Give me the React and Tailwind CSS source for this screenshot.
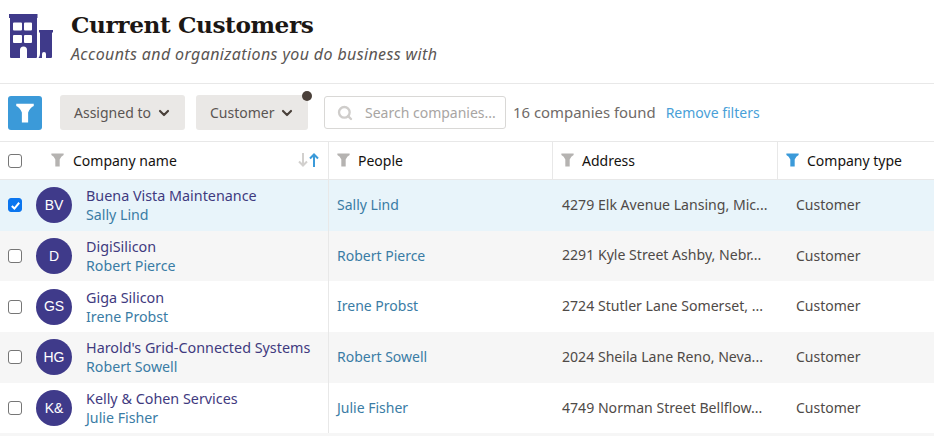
import { Search, ChevronDown } from "lucide-react";

const sans = "font-['Noto_Sans','Open_Sans',sans-serif]";

const ROWS = [
  { initials: "BV", name: "Buena Vista Maintenance", person: "Sally Lind", address: "4279 Elk Avenue Lansing, Mic...", selected: true },
  { initials: "D", name: "DigiSilicon", person: "Robert Pierce", address: "2291 Kyle Street Ashby, Nebr...", striped: true },
  { initials: "GS", name: "Giga Silicon", person: "Irene Probst", address: "2724 Stutler Lane Somerset, ..." },
  { initials: "HG", name: "Harold's Grid-Connected Systems", person: "Robert Sowell", address: "2024 Sheila Lane Reno, Neva...", striped: true },
  { initials: "K&", name: "Kelly & Cohen Services", person: "Julie Fisher", address: "4749 Norman Street Bellflow..." },
];

/* ── Funnel glyph, used in the toolbar and column heads ── */
function Funnel({ className }) {
  return (
    <svg viewBox="0 0 14 16" className={className} fill="currentColor">
      <path d="M0 0.5h14v1.800Q11 3.500 9.500 7.500V15.500H4.500V7.500Q3 3.500 0 2.300z" />
    </svg>
  );
}

function SortArrow({ up, className }) {
  return (
    <svg viewBox="0 0 10 14" className={`w-[10px] h-[14px] ${className}`} fill="none" stroke="currentColor" strokeWidth="2">
      <path d={up ? "M5 1.500V14M1 5.500l4-4 4 4" : "M5 0V12.500M1 8.500l4 4 4-4"} />
    </svg>
  );
}

function BuildingLogo() {
  return (
    <svg viewBox="0 0 44 44" className="w-[44px] h-[44px] text-[#3f3a8a] shrink-0" fill="currentColor">
      <path
        fillRule="evenodd"
        d="M0 0h28.500v4H28V43a1 1 0 0 1-1 1H18V36a3.500 3.500 0 0 0-7 0v8H2a1 1 0 0 1-1-1V4H0zM5 8.500a1 1 0 0 0-1 1v6a1 1 0 0 0 1 1h7a1 1 0 0 0 1-1v-6a1 1 0 0 0-1-1zm11 0a1 1 0 0 0-1 1v6a1 1 0 0 0 1 1h6a1 1 0 0 0 1-1v-6a1 1 0 0 0-1-1zM5 21a1 1 0 0 0-1 1v6a1 1 0 0 0 1 1h7a1 1 0 0 0 1-1v-6a1 1 0 0 0-1-1zm11 0a1 1 0 0 0-1 1v6a1 1 0 0 0 1 1h6a1 1 0 0 0 1-1v-6a1 1 0 0 0-1-1z"
      />
      <path d="M30 16h14v2.500h-1V43a1 1 0 0 1-1 1H37V40a2 2 0 0 0-4 0v4H29.500Q31 42 31 40V18.500H30z" />
    </svg>
  );
}

function Checkbox({ checked }) {
  return (
    <span
      className={`w-[14px] h-[14px] rounded-[3px] flex items-center justify-center shrink-0 border
        ${checked ? "bg-[#0b76ef] border-[#0b76ef]" : "bg-white border-[#767676]"}`}
    >
      {checked && (
        <svg viewBox="0 0 12 12" className="w-[11px] h-[11px]" fill="none" stroke="white" strokeWidth="2.2">
          <path d="M2 6.500l2.800 2.800L10 3" />
        </svg>
      )}
    </span>
  );
}

function Dropdown({ label, width }) {
  return (
    <button className={`h-[35px] ${width} rounded-[3px] bg-[#eae8e6] flex items-center justify-between pl-[14px] pr-[13px] text-[14px] text-[#5a5553]`}>
      <span>{label}</span>
      <ChevronDown size={16} strokeWidth={3.2} className="text-[#4a403a]" />
    </button>
  );
}

function HeadCell({ label, width, active }) {
  return (
    <div className={`${width} h-full flex items-center border-r border-[#e8e8e8] last:border-r-0 shrink-0`}>
      <Funnel className={`w-[13px] h-[14px] ml-[8px] mb-[2px] ${active ? "text-[#3b9ad9]" : "text-[#b5b3b1]"}`} />
      <span className="ml-[8px] text-[14px] text-[#14120f]">{label}</span>
    </div>
  );
}

function Row({ row }) {
  const bg = row.selected ? "bg-[#e8f4fa]" : row.striped ? "bg-[#f6f6f6]" : "bg-white";
  return (
    <div className={`flex h-[50.7px] shrink-0 items-stretch ${bg}`}>
      <div className="w-[329px] shrink-0 flex items-center border-r border-[#e8e8e8]">
        <div className="ml-[8px]"><Checkbox checked={row.selected} /></div>
        <div className="ml-[14px] w-[36px] h-[36px] rounded-full bg-[#3f3a8a] text-white flex items-center justify-center text-[14px] font-['Liberation_Sans',sans-serif] shrink-0">
          {row.initials}
        </div>
        <div className="ml-[14px] leading-[19px] whitespace-nowrap">
          <div className="text-[14.350px] text-[#3f3a7f]">{row.name}</div>
          <div className="text-[14.200px] text-[#3a7ca5]">{row.person}</div>
        </div>
      </div>
      <div className="w-[224px] shrink-0 flex items-center pl-[8px] pb-[2px] text-[14px] text-[#3a7ca5]">{row.person}</div>
      <div className="w-[225px] shrink-0 flex items-center pl-[9px] pb-[2px] text-[14.100px] text-[#4f4a47] whitespace-nowrap">{row.address}</div>
      <div className="flex-1 flex items-center pl-[18px] pb-[2px] text-[14px] text-[#4f4a47]">Customer</div>
    </div>
  );
}

export default function App() {
  return (
    <div className={`w-[934px] h-[436px] overflow-hidden bg-white flex flex-col ${sans}`}>
      {/* ── Page title ── */}
      <div className="h-[84px] shrink-0 flex items-start border-b border-[#e8e8e8] pl-[9px] pt-[14px]">
        <BuildingLogo />
        <div className="ml-[18px] -mt-[4px]">
          <h1 className="text-[23.200px] leading-[30px] font-bold text-[#1c1714] font-['DejaVu_Serif',serif] tracking-[-0.4px]">Current Customers</h1>
          <p className="text-[16px] leading-[22px] mt-[3px] italic text-[#5a5553] tracking-[0.38px]">Accounts and organizations you do business with</p>
        </div>
      </div>

      {/* ── Filter bar ── */}
      <div className="h-[58px] shrink-0 flex items-center border-b border-[#e8e8e8] pl-[8px]">
        <button className="w-[34px] h-[34px] rounded-[3px] bg-[#3b9ad9] flex items-center justify-center">
          <Funnel className="w-[18px] h-[20px] text-white" />
        </button>
        <div className="ml-[18px]"><Dropdown label="Assigned to" width="w-[125px]" /></div>
        <div className="ml-[11px] relative">
          <Dropdown label="Customer" width="w-[112px]" />
          <span className="absolute -top-[4px] -right-[4px] w-[10px] h-[10px] rounded-full bg-[#4a403a]" />
        </div>
        <div className="ml-[16px] w-[182px] h-[33px] border border-[#d9d8d6] rounded-[3px] flex items-center pl-[12px] overflow-hidden">
          <Search size={16} strokeWidth={3.5} className="text-[#cfcdcb] shrink-0" />
          <span className="ml-[12px] text-[14px] text-[#a8a5a3] whitespace-nowrap w-[131px] overflow-hidden">Search companies...</span>
        </div>
        <span className="ml-[7px] text-[14.900px] text-[#6f6a67] whitespace-nowrap">16 companies found</span>
        <span className="ml-[10px] text-[14px] text-[#4a9fd8] whitespace-nowrap">Remove filters</span>
      </div>

      {/* ── Table head ── */}
      <div className="h-[38px] shrink-0 flex items-center border-b border-[#e8e8e8]">
        <div className="w-[329px] h-full shrink-0 flex items-center border-r border-[#e8e8e8]">
          <div className="ml-[8px]"><Checkbox /></div>
          <Funnel className="w-[13px] h-[14px] ml-[29px] mb-[2px] text-[#b5b3b1]" />
          <span className="ml-[9px] text-[14px] text-[#14120f]">Company name</span>
          <div className="ml-auto mr-[9px] mb-[2px] flex gap-[1px]">
            <SortArrow className="text-[#d2d0ce]" />
            <SortArrow up className="text-[#3b9ad9]" />
          </div>
        </div>
        <HeadCell label="People" width="w-[224px]" />
        <HeadCell label="Address" width="w-[225px]" />
        <HeadCell label="Company type" width="flex-1" active />
      </div>

      {/* ── Rows ── */}
      <div className="flex flex-col flex-1 bg-[#f6f6f6]">
        {ROWS.map((row) => <Row key={row.initials} row={row} />)}
      </div>
    </div>
  );
}
